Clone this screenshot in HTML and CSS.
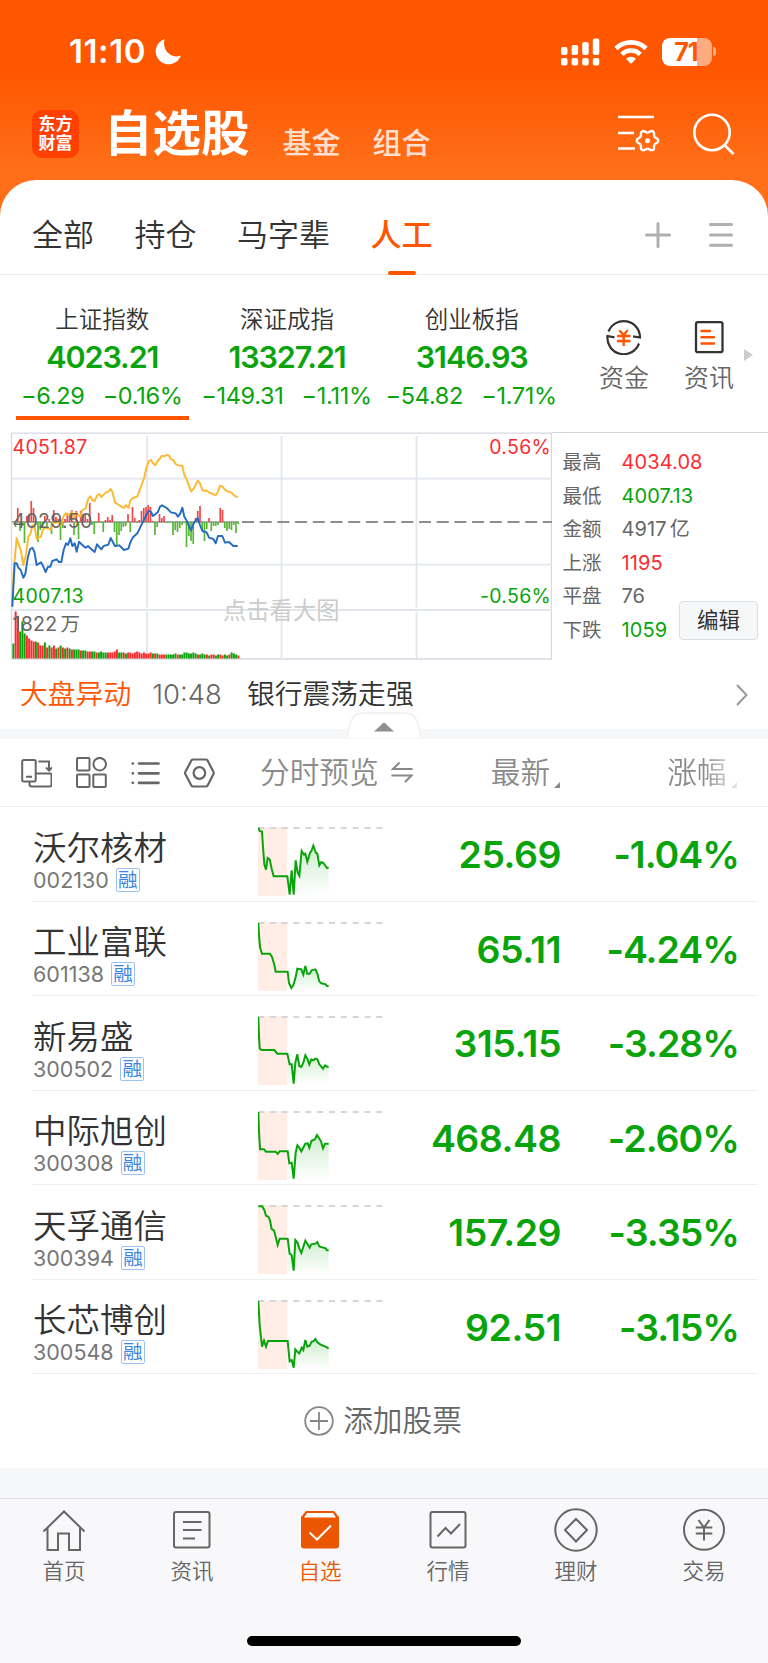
FILE: index.html
```html
<!DOCTYPE html>
<html lang="zh-CN">
<head>
    <meta charset="UTF-8">
    <meta name="viewport" content="width=device-width, initial-scale=1.0">
    <title>自选股</title>
    <link rel="stylesheet" href="styles.css">
</head>
<body>
    <header class="header">
        <div class="status-bar">
            <span class="time">11:10</span>
            <svg class="moon" width="28" height="28" viewBox="0 0 28 28"><path d="M10.6 1A13 13 0 1 0 27 17.6C18 21 7.500 13 10.600 1z" fill="#fff"/></svg>
            <svg class="signal" width="39" height="28" viewBox="0 0 39 28" fill="#fff">
                <rect x="0" y="9" width="6.500" height="8" rx="2"/><rect x="10.600" y="7" width="6.500" height="10" rx="2"/><rect x="21.200" y="4" width="6.500" height="13" rx="2"/><rect x="31.800" y="0.500" width="6.500" height="16.500" rx="2"/>
                <rect x="0" y="20" width="6.500" height="7.500" rx="2"/><rect x="10.600" y="20" width="6.500" height="7.500" rx="2"/><rect x="21.200" y="20" width="6.500" height="7.500" rx="2"/><rect x="31.800" y="20" width="6.500" height="7.500" rx="2"/>
            </svg>
            <svg class="wifi" width="34" height="26" viewBox="0 0 34 26">
                <path d="M2 9.500a21.500 21.500 0 0 1 30 0M7.800 15.300a13.200 13.200 0 0 1 18.400 0" fill="none" stroke="#fff" stroke-width="4.600"/>
                <path d="M12 19.700a7.500 7.500 0 0 1 10 0L17 25z" fill="#fff"/>
            </svg>
            <div class="battery"><span>71</span></div>
            <i class="battery-nub"></i>
        </div>
        <div class="title-bar">
            <div class="logo"><span>东方</span><span>财富</span></div>
            <h1>自选股</h1>
            <a class="sub">基金</a>
            <a class="sub">组合</a>
            <svg class="list-set" width="42" height="40" viewBox="0 0 42 40" fill="none" stroke="#fff" stroke-width="2.700">
                <path d="M0 3h36M0 19h16M0 34.500h17"/>
                <g stroke-width="2.400">
                    <path id="lobe" d="M36.400 22.700C37.500 24.500 40.300 24 40.300 26.700S37.500 28.900 36.400 30.700"/>
                    <use href="#lobe" transform="rotate(60 29.500 26.700)"/>
                    <use href="#lobe" transform="rotate(120 29.500 26.700)"/>
                    <use href="#lobe" transform="rotate(180 29.500 26.700)"/>
                    <use href="#lobe" transform="rotate(240 29.500 26.700)"/>
                    <use href="#lobe" transform="rotate(300 29.500 26.700)"/>
                </g>
                <circle cx="29.500" cy="26.700" r="2.500" fill="#fff" stroke="none"/>
            </svg>
            <svg class="search" width="42" height="42" viewBox="0 0 42 42" fill="none" stroke="#fff" stroke-width="2.600"><circle cx="19" cy="19.500" r="17.700"/><path d="M31 31.500l9.500 9.500"/></svg>
        </div>
    </header>

    <main class="sheet">
        <nav class="groups">
            <a>全部</a>
            <a>持仓</a>
            <a>马字辈</a>
            <a class="active">人工</a>
            <svg class="plus" width="26" height="26" viewBox="0 0 26 26" stroke="#b0b0b0" stroke-width="3" stroke-linecap="round"><path d="M13 1.500v23M1.500 13h23"/></svg>
            <svg width="24" height="26" viewBox="0 0 24 26" stroke="#b0b0b0" stroke-width="3" stroke-linecap="round"><path d="M1.500 2.500h21M1.500 13h21M1.500 23.300h21"/></svg>
        </nav>

        <section class="indices">
            <div class="index active">
                <div class="name">上证指数</div>
                <div class="value">4023.21</div>
                <div class="change"><span>−6.29</span><span>−0.16%</span></div>
            </div>
            <div class="index">
                <div class="name">深证成指</div>
                <div class="value">13327.21</div>
                <div class="change"><span>−149.31</span><span>−1.11%</span></div>
            </div>
            <div class="index">
                <div class="name">创业板指</div>
                <div class="value">3146.93</div>
                <div class="change"><span>−54.82</span><span>−1.71%</span></div>
            </div>
            <div class="quick">
                <svg width="36" height="36" viewBox="0 0 36 36" fill="none" stroke="#333" stroke-width="2.200">
                    <path d="M2.500 12.500A16.300 16.300 0 0 1 34 18.500l-7-1.200M33 24.500A16.300 16.300 0 0 1 1.500 17l7 1.300"/>
                    <path stroke="#ff5500" stroke-width="2.400" stroke-linecap="round" d="M14 12l3.500 4 3.500-4M12 17h11.500M12 22h11.500M17.700 17v9"/>
                </svg>
                资金
            </div>
            <div class="quick news-link">
                <svg width="36" height="36" viewBox="0 0 36 36" fill="none" stroke="#333" stroke-width="2.300">
                    <rect x="5" y="3.200" width="26.500" height="30" rx="2"/>
                    <path stroke="#ff5500" stroke-width="2.400" stroke-linecap="round" d="M10.500 12h8.500M10.500 18.300h12.500M10.500 24.500h12.500"/>
                </svg>
                资讯
            </div>
            <i class="more"></i>
        </section>

        <section class="market">
            <svg class="chart" width="552" height="228" viewBox="0 0 552 228">
                <g fill="none" stroke="#e2e6ed" stroke-width="1.300">
                    <path stroke="#d5d9e1" d="M11 1.200h541M11.500 1v226M11 227h541M551.500 1v226"/>
                    <path stroke-width="1.800" d="M12 46.700h540M12 132.700h540M12 178h540M147 4v171.500M147 179.500V227M281.500 4v171.500M281.500 179.500V227M416.500 4v171.500M416.500 179.500V227"/>
                    <path stroke="#8e8e8e" stroke-width="1.800" stroke-dasharray="12 5.700" d="M242 90h310"/>
                    <path stroke="#8e8e8e" stroke-width="1.500" d="M12 90h227"/>
                </g>
                <text class="watermark" x="223" y="187">点击看大图</text>
                <g id="bars"></g>
                <g transform="translate(0 -12) scale(.33333)" fill="none" stroke-width="5.800" stroke-linejoin="round">
                    <polyline stroke="#fdb92f" points="36,560 42,440 50,355 55,370 62,390 70,435 78,405 85,350 92,340 97,315 104,320 110,357 123,350 128,330 140,320 152,330 160,310 175,305 183,318 190,290 197,280 203,285 210,283 215,275 220,292 230,280 240,290 247,270 257,265 264,238 271,229 277,240 284,243 291,227 298,222 304,231 311,224 318,217 325,215 332,207 338,218 345,248 352,252 365,260 372,264 378,255 385,264 392,240 399,234 412,229 419,210 432,175 439,145 446,124 453,120 459,130 466,136 473,123 480,115 486,107 493,109 500,105 506,106 513,118 520,120 527,132 534,136 547,138 553,165 560,178 567,197 573,214 580,208 587,195 593,182 600,190 607,210 614,213 620,211 627,218 634,220 647,226 654,215 660,197 668,200 675,210 682,214 695,218 702,226 713,232"/>
                    <polyline stroke="#256cc0" points="37,560 44,430 50,430 55,443 62,450 70,473 76,462 83,415 90,388 97,383 103,395 110,435 123,427 130,440 137,456 144,440 151,440 157,423 170,418 177,426 184,426 191,390 198,370 204,375 211,355 217,378 224,370 230,395 237,365 250,378 257,383 264,378 271,385 284,396 291,373 304,388 311,378 325,374 332,354 345,378 358,376 372,390 385,386 392,365 399,352 412,340 425,313 439,285 446,272 453,276 459,288 473,277 480,260 486,256 500,264 513,277 527,280 534,290 541,280 547,263 553,290 560,302 567,318 573,332 580,312 593,294 600,315 607,333 620,337 627,353 640,357 647,370 654,348 667,348 675,368 687,366 700,378 713,378"/>
                </g>
                <text class="up" x="12.500" y="21.500">4051.87</text>
                <text x="12.500" y="96">4029.50</text>
                <text class="down" x="12.500" y="171">4007.13</text>
                <text x="12.500" y="199">1822<tspan dx="3">万</tspan></text>
                <text class="up" x="551" y="21.500" text-anchor="end">0.56%</text>
                <text class="down" x="551" y="171" text-anchor="end">-0.56%</text>
            </svg>
            <dl class="stats">
                <dt>最高</dt><dd class="up">4034.08</dd>
                <dt>最低</dt><dd class="down">4007.13</dd>
                <dt>金额</dt><dd>4917<small>亿</small></dd>
                <dt>上涨</dt><dd class="up">1195</dd>
                <dt>平盘</dt><dd>76</dd>
                <dt>下跌</dt><dd class="down">1059</dd>
            </dl>
            <button class="edit">编辑</button>
        </section>

        <section class="alert">
            <span class="tag">大盘异动</span>
            <span class="at">10:48</span>
            <span class="msg">银行震荡走强</span>
            <svg width="12" height="22" viewBox="0 0 12 22" fill="none" stroke="#999" stroke-width="2"><path d="M1 1l9.500 10L1 21"/></svg>
        </section>
        <div class="divider">
            <svg class="collapse" width="76" height="28" viewBox="0 0 76 28"><path d="M1 26.500C3.500 10 6 2 18 2H58C70 2 72.500 10 75 26.500" fill="#fff" stroke="#eceef0" stroke-width="1.300"/><path d="M28 20.500l9-8.300q1-.9 2 0l9 8.300z" fill="#8f8f8f"/></svg>
        </div>

        <section class="toolbar">
            <svg width="31" height="30" viewBox="0 0 31 30" fill="none" stroke="#666" stroke-width="2">
                <rect x="1.200" y="2" width="13.500" height="21.500" rx="1.500"/><path d="M5 18.700h6M8.500 24v2.500q0 2 2 2h18q2 0 2-2V17q0-1.500-1.500-1.500H15M17.500 3.500H28v9"/><path d="M25 9.500l3 3 3-3"/>
            </svg>
            <svg width="31" height="31" viewBox="0 0 31 31" fill="none" stroke="#666" stroke-width="2"><rect x="1" y="1" width="12.500" height="12.500" rx="1"/><circle cx="23.700" cy="7.200" r="6.300"/><rect x="1" y="17.500" width="12.500" height="12.500" rx="1"/><rect x="17.300" y="17.500" width="12.500" height="12.500" rx="1"/></svg>
            <svg width="29" height="26" viewBox="0 0 29 26" stroke="#666" stroke-width="2.700" stroke-linecap="round"><path d="M8 3.500h19.500M8 13.300h19.500M8 22.800h19.500M1.800 3.500h.1M1.800 13.300h.1M1.800 22.800h.1"/></svg>
            <svg width="31" height="30" viewBox="0 0 31 30" fill="none" stroke="#666" stroke-width="2.200"><path stroke-linejoin="round" d="M9 1.500h13q1 0 1.500.8l6 11.700q.5 1 0 2l-6 11.700q-.5.800-1.500.8H9q-1 0-1.500-.8L1.300 16q-.5-1 0-2L7.500 2.300Q8 1.500 9 1.500z"/><circle cx="15.400" cy="15" r="5.800"/></svg>
            <span class="col preview">分时预览
                <svg width="22" height="22" viewBox="0 0 22 22" fill="none" stroke="#888" stroke-width="2"><path d="M21.500 8H2l6.500-6.500M.5 14.500h20L14 21"/></svg>
            </span>
            <span class="col latest">最新<i class="sort"></i></span>
            <span class="col pct">涨幅<i class="sort"></i></span>
        </section>

        <ul class="stocks" id="stocks"></ul>

        <div class="add">
            <svg width="30" height="30" viewBox="0 0 30 30" fill="none" stroke="#85858a" stroke-width="1.800"><circle cx="15" cy="15" r="13.800"/><path d="M15 6v18M6 15h18"/></svg>
            添加股票
        </div>
    </main>

    <nav class="tab-bar">
        <a>
            <svg width="44" height="44" viewBox="0 0 44 44"><path d="M1.500 23.500L22 3.500l20.500 20M5.500 20v22h10.500V25.500h11V42h11V20"/></svg>
            首页
        </a>
        <a>
            <svg width="44" height="44" viewBox="0 0 44 44"><rect x="4" y="4" width="35.500" height="35.500" rx="2"/><path stroke-width="2.200" d="M13 14h18.500M13 22h18.500M13 30.500h12"/></svg>
            资讯
        </a>
        <a class="active">
            <svg width="44" height="44" viewBox="0 0 44 44"><path fill="#ec5600" stroke="none" d="M8 3h28l5 6v28.500q0 3-3 3H6q-3 0-3-3V9z"/><path fill="#fff" stroke="none" d="M9 5h26l3 4.500H6z"/><path stroke="#fff" d="M11.500 24.500l7.500 7L33 17.500"/></svg>
            自选
        </a>
        <a>
            <svg width="44" height="44" viewBox="0 0 44 44"><rect x="4.500" y="4" width="35" height="35.500" rx="2"/><path d="M11.500 28.500l8-8.500 5.500 5.500 9-9.500"/></svg>
            行情
        </a>
        <a>
            <svg width="44" height="44" viewBox="0 0 44 44"><circle cx="22" cy="22" r="20.700"/><path d="M22 11l11 11-11 11.500L11 22z"/></svg>
            理财
        </a>
        <a>
            <svg width="44" height="44" viewBox="0 0 44 44"><circle cx="22" cy="21.800" r="20"/><path d="M16.500 12l5.500 7.500 5.500-7.500M22 19.500V32.500M13.800 19.500h16.500M13.800 25.500h16.500"/></svg>
            交易
        </a>
        <div class="home-indicator"></div>
    </nav>

    <script>
        const stocks = [
            { name: '沃尔核材', code: '002130', price: '25.69', pct: '-1.04%', line: '1,2 5,12 12,14 15,60 19,112 24,128 29,93 35,97 41,125 47,148 88,148 95,203 101,130 107,203 113,100 119,137 124,146 131,72 138,83 142,80 148,104 156,78 160,72 166,56 174,78 178,80 184,115 190,105 196,108 207,123 212,121' },
            { name: '工业富联', code: '601138', price: '65.11', pct: '-4.24%', line: '1,3 3,40 6,75 12,95 36,95 42,105 49,128 53,149 89,149 93,183 100,198 106,190 113,165 118,140 130,142 136,158 142,132 148,155 155,155 161,145 172,142 178,155 184,178 190,184 203,187 207,192 212,192' },
            { name: '新易盛', code: '300502', price: '315.15', pct: '-3.28%', line: '1,3 3,60 5,97 10,102 49,102 58,113 88,113 95,145 101,145 107,203 112,140 118,115 124,150 130,153 136,140 142,118 148,128 154,145 160,130 166,133 172,128 178,130 184,145 195,158 201,148 207,152 212,152' },
            { name: '中际旭创', code: '300308', price: '468.48', pct: '-2.60%', line: '1,3 3,60 6,115 18,115 24,122 53,122 59,129 65,121 89,121 94,157 101,155 107,203 113,125 118,103 124,110 130,121 142,98 149,97 154,110 160,90 166,87 171,84 177,72 189,91 195,112 201,98 212,98' },
            { name: '天孚通信', code: '300394', price: '157.29', pct: '-3.35%', line: '1,4 12,4 19,15 24,32 31,35 36,46 41,72 48,76 53,95 59,120 65,101 89,101 95,146 101,150 107,197 112,105 118,112 124,130 130,144 142,107 149,118 155,128 160,118 172,116 178,111 184,124 203,130 207,136 212,136' },
            { name: '长芯博创', code: '300548', price: '92.51', pct: '-3.15%', line: '1,3 5,75 12,140 18,122 24,140 30,123 89,123 95,184 101,180 107,203 112,148 118,155 124,160 131,143 136,150 142,120 148,140 155,137 161,125 166,124 172,117 178,127 190,135 201,139 212,145' }
        ];

        document.getElementById('stocks').innerHTML = stocks.map(s => `
            <li>
                <div class="info">
                    <div class="name">${s.name}</div>
                    <div class="code">${s.code}<b>融</b></div>
                </div>
                <svg class="spark" width="125" height="70" viewBox="0 0 375 210">
                    <defs><linearGradient id="fade" x1="0" y1="0" x2="0" y2="1"><stop offset="0" stop-color="#09a40b" stop-opacity=".2"/><stop offset="1" stop-color="#09a40b" stop-opacity="0"/></linearGradient></defs>
                    <rect width="87" height="207" fill="#ffede6"/>
                    <path d="M0 3h375" stroke="#d5d6dc" stroke-width="6" stroke-dasharray="18 17.500"/>
                    <polygon points="88,207 ${s.line.split(' ').filter(p => parseFloat(p) >= 88).join(' ')} 212,207" fill="url(#fade)"/>
                    <polyline points="${s.line}" fill="none" stroke="#09a40b" stroke-width="6"/>
                </svg>
                <div class="price">${s.price}</div>
                <div class="pct">${s.pct}</div>
            </li>`).join('');

        // intraday momentum around the previous close, one value per bar
        const momentum = [0, -5, 14, -9, -4, -21, 6, 8, 21, 14, -3, -20, -8, -5, 6, -4, 3, -12, 12, 5, 3, -18, -6, 3, 9, 7, 12, -13, 11, -17, 11, 8, 8, 3, 19, -3, -12, -1, 9, -1, -10, 2, 5, 2, 7, -10, -24, -13, -9, -5, -4, 8, -10, 15, 4, -1, 2, 11, 14, 15, 17, 15, 1, -13, -5, 8, 4, 6, -1, -1, 0, -13, -8, -10, -6, -3, -1, -25, -14, -19, -22, 4, 11, 16, -8, -19, -7, 4, -9, -4, -4, -3, 14, 12, -6, -9, -7, -8, -3, -11, -2];
        const volume = [15, 47, 42, 27, 37, 25, 23, 20, 18, 17, 17, 16, 13, 13, 16, 11, 13, 11, 13, 10, 11, 13, 11, 10, 11, 10, 9, 9, 9, 9, 8, 8, 8, 7, 7, 7, 7, 6, 6, 7, 6, 6, 6, 6, 6, 7, 9, 6, 6, 6, 5, 6, 6, 5, 6, 7, 6, 5, 6, 5, 5, 6, 5, 5, 5, 4, 4, 4, 4, 4, 4, 4, 5, 4, 4, 4, 6, 6, 5, 5, 6, 5, 4, 4, 5, 4, 4, 3, 4, 4, 3, 4, 4, 3, 4, 3, 4, 6, 5, 4, 3];
        const colors = 'grrgggrrrrgrrrgrgrrgrgrgrgrgggrggrrggrggggrrrrrggrgrrrrrrrrrrrgrgrrrgggggrggggggggrgggrgrrggrrggrggg';
        let bars = '';
        momentum.forEach((m, i) => {
            const x = 12.4 + i * 2.25;
            const h = volume[i];
            bars += `<rect x="${x}" y="${m > 0 ? 90 - m : 90}" width="1.7" height="${Math.abs(m)}" fill="${m > 0 ? '#f04848' : '#58b637'}"/>`;
            bars += `<rect x="${x}" y="${226.5 - h}" width="2" height="${h}" fill="${colors[i] === 'g' ? '#09a40b' : '#fb2c30'}"/>`;
        });
        document.getElementById('bars').innerHTML = bars;
    </script>
</body>
</html>
```
FILE: styles.css
```css
* {
    margin: 0;
    padding: 0;
    box-sizing: border-box;
}

body {
    width: 768px;
    font-family: Inter, "Noto Sans CJK SC", sans-serif;
    line-height: 1.2;
    background: #f6f7f9;
    color: #333;
}

svg {
    display: block;
    flex: none;
}

.up {
    color: #fb2c30;
    fill: #fb2c30;
}

.down {
    color: #09a40b;
    fill: #09a40b;
}

/* header */
.header {
    height: 220px;
    background: linear-gradient(#ff5700 75px, #ff6e18 165px);
    color: #fff;
}

.status-bar {
    display: flex;
    align-items: center;
    height: 103px;
    padding-left: 69px;
}

.time {
    width: 78px;
    font-size: 33px;
    font-weight: 600;
    letter-spacing: 0.6px;
    white-space: nowrap;
}

.moon {
    margin-left: 7px;
}

.signal {
    margin-left: 379px;
}

.wifi {
    margin-left: 14px;
}

.battery {
    display: flex;
    align-items: center;
    justify-content: center;
    width: 50px;
    height: 28px;
    margin-left: 14px;
    padding-right: 2px;
    border-radius: 8px;
    background: linear-gradient(90deg, #fff 35px, #ffab80 35px);
    color: #ff5700;
    font-size: 25px;
    font-weight: 700;
    letter-spacing: -1px;
}

.battery-nub {
    width: 3px;
    height: 9px;
    margin-left: 1px;
    border-radius: 0 3px 3px 0;
    background: #ffab80;
}

.title-bar {
    display: flex;
    align-items: center;
    height: 62px;
    padding-left: 32px;
}

.logo {
    display: flex;
    flex-direction: column;
    align-items: center;
    justify-content: center;
    width: 47px;
    height: 48px;
    border-radius: 10px;
    background: #ff4000;
    font-size: 17px;
    font-weight: 700;
    line-height: 19.500px;
}

h1 {
    margin-left: 25px;
    font-size: 48.500px;
    font-weight: 600;
    line-height: 60px;
}

.sub {
    margin-left: 33px;
    padding-top: 19px;
    font-size: 29px;
    font-weight: 500;
    line-height: 40px;
    color: #ffe0d0;
}

.sub + .sub {
    margin-left: 32px;
}

.list-set {
    margin-left: 187.500px;
}

.search {
    margin-left: 33px;
}

/* white sheet */
.sheet {
    position: relative;
    margin-top: -40.500px;
    border-radius: 36px 36px 0 0;
    background: #fff;
}

.groups {
    display: flex;
    align-items: center;
    gap: 40.500px;
    height: 95px;
    padding: 16px 35px 0 32px;
    border-bottom: 1.500px solid #ededed;
    font-size: 31px;
    font-weight: 350;
}

.groups a {
    position: relative;
    line-height: 40px;
}

.groups .active {
    color: #ff5500;
    font-weight: 500;
}

.groups .active::after {
    content: "";
    position: absolute;
    left: 17px;
    bottom: -20px;
    width: 28px;
    height: 4px;
    border-radius: 2px;
    background: #ff5500;
}

.plus {
    margin-left: auto;
    margin-right: -2px;
}

.indices {
    display: flex;
    height: 157.500px;
    padding: 26px 0 0 10px;
}

.index {
    display: flex;
    flex-direction: column;
    align-items: center;
    width: 184.700px;
    color: #09a40b;
}

.index .name {
    color: #333;
    font-size: 23.500px;
    font-weight: 350;
    line-height: 38px;
}

.index .value {
    font-size: 30.500px;
    font-weight: 600;
    line-height: 36px;
    letter-spacing: -1.1px;
}

.index .change {
    display: flex;
    gap: 18px;
    height: 45.500px;
    padding: 0 6.500px 0 5.500px;
    font-size: 23.500px;
    line-height: 42px;
    letter-spacing: -0.3px;
    white-space: nowrap;
}

.index.active .change {
    border-bottom: 4px solid #ff5500;
}

.quick {
    display: flex;
    flex-direction: column;
    align-items: center;
    width: 50px;
    margin-left: 35px;
    padding-top: 18px;
    font-size: 25px;
    font-weight: 350;
    line-height: 47px;
    color: #666;
    white-space: nowrap;
}

.news-link {
    margin-left: 35px;
}

.more {
    align-self: flex-start;
    margin: 48.500px 0 0 10px;
    border: 6px solid transparent;
    border-left: 9px solid #ccc;
    border-right: 0;
}

.market {
    position: relative;
    display: flex;
    height: 228px;
}

.chart text {
    font-size: 19.500px;
    letter-spacing: 0.3px;
    fill: #666;
}

.chart text.up {
    fill: #fb2c30;
}

.chart text.down {
    fill: #09a40b;
}

.chart text.watermark {
    font-size: 23.300px;
    letter-spacing: 0;
    fill: #ccc;
}

.stats {
    display: grid;
    grid-template-columns: 59px 1fr;
    grid-auto-rows: 33.500px;
    flex: 1;
    padding: 11px 0 0 10.500px;
    border-top: 1.500px solid #d5d9e1;
    font-size: 19.500px;
    line-height: 36px;
    color: #666;
}

.stats dd {
    font-size: 20px;
    letter-spacing: 0.1px;
}

.stats small {
    margin-left: 3px;
    font-size: 20px;
}

.edit {
    position: absolute;
    right: 10px;
    bottom: 20px;
    width: 79px;
    height: 39px;
    border: 1px solid #dcdee3;
    border-radius: 4px;
    background: #f6f7f9;
    color: #333;
    font-family: inherit;
    font-size: 21.500px;
    line-height: 26px;
    padding-bottom: 2px;
}

.alert {
    display: flex;
    align-items: center;
    height: 69px;
    padding: 0 20px 0 20px;
    font-size: 27.800px;
    font-weight: 350;
}

.alert .tag {
    color: #ff5500;
}

.alert .at {
    margin-left: 21px;
    color: #666;
    font-size: 27.500px;
}

.alert .msg {
    margin: 0 auto 0 25px;
}

.divider {
    position: relative;
    height: 10px;
    background: #f5f7f9;
}

.collapse {
    position: absolute;
    left: 346px;
    top: -18px;
}

.toolbar {
    display: flex;
    align-items: center;
    height: 68px;
    padding-left: 21px;
    border-bottom: 1.500px solid #ededed;
}

.toolbar > svg {
    margin-right: 24px;
}

.col {
    display: flex;
    align-items: center;
    font-size: 29.700px;
    font-weight: 350;
    color: #8a8a8a;
    white-space: nowrap;
}

.preview {
    gap: 12px;
    margin-left: 21px;
}

.latest {
    margin-left: 78px;
}

.pct .sort,
.latest .sort {
    align-self: flex-end;
    margin: 0 0 2px 4px;
    border: 3.500px solid #888;
    border-top-color: transparent;
    border-left-color: transparent;
}

.toolbar .pct {
    margin-left: 107px;
    -webkit-mask-image: linear-gradient(90deg, #000 50%, rgba(0, 0, 0, 0.2));
    mask-image: linear-gradient(90deg, #000 50%, rgba(0, 0, 0, 0.2));
}

/* stock list */
.stocks {
    list-style: none;
    padding: 0 10px 0 32px;
}

.stocks li {
    display: flex;
    align-items: center;
    height: 94.500px;
    padding-top: 2px;
    border-bottom: 1.500px solid #efefef;
}

.info {
    width: 226px;
    padding-left: 1px;
}

.stocks .name {
    font-size: 33.500px;
    font-weight: 350;
    line-height: 36px;
    margin-top: 14px;
}

.code {
    display: flex;
    align-items: center;
    font-size: 21.500px;
    line-height: 28px;
    color: #777;
}

.code b {
    display: flex;
    align-items: center;
    justify-content: center;
    width: 24px;
    height: 24px;
    margin-left: 7px;
    border: 1.500px solid #9cc2f0;
    border-radius: 2px;
    color: #3c87dd;
    font-size: 19.500px;
    font-weight: 400;
}

.spark {
    margin-top: 15px;
}

.price,
.stocks .pct {
    color: #09a40b;
    font-size: 37.500px;
    font-weight: 600;
    letter-spacing: -0.5px;
    text-align: right;
}

.price {
    width: 178px;
}

.stocks .pct {
    width: 178px;
    letter-spacing: -1px;
}

.add {
    display: flex;
    align-items: center;
    justify-content: center;
    gap: 9px;
    height: 94px;
    padding-right: 2px;
    font-size: 29.700px;
    font-weight: 350;
    color: #666;
}

/* bottom navigation */
.tab-bar {
    display: grid;
    grid-template-columns: repeat(6, 1fr);
    height: 165px;
    margin-top: 30px;
    padding-top: 9px;
    border-top: 1.500px solid #e2e3e6;
    background: #f8f8fb;
}

.tab-bar a {
    display: flex;
    flex-direction: column;
    align-items: center;
    font-size: 21.500px;
    font-weight: 350;
    line-height: 38px;
    color: #666;
}

.tab-bar svg {
    fill: none;
    stroke: #666;
    stroke-width: 2;
}

.tab-bar .active {
    color: #ec5600;
}

.home-indicator {
    grid-column: 1 / -1;
    justify-self: center;
    align-self: end;
    width: 274px;
    height: 10px;
    margin-bottom: 17px;
    border-radius: 5px;
    background: #000;
}
```
